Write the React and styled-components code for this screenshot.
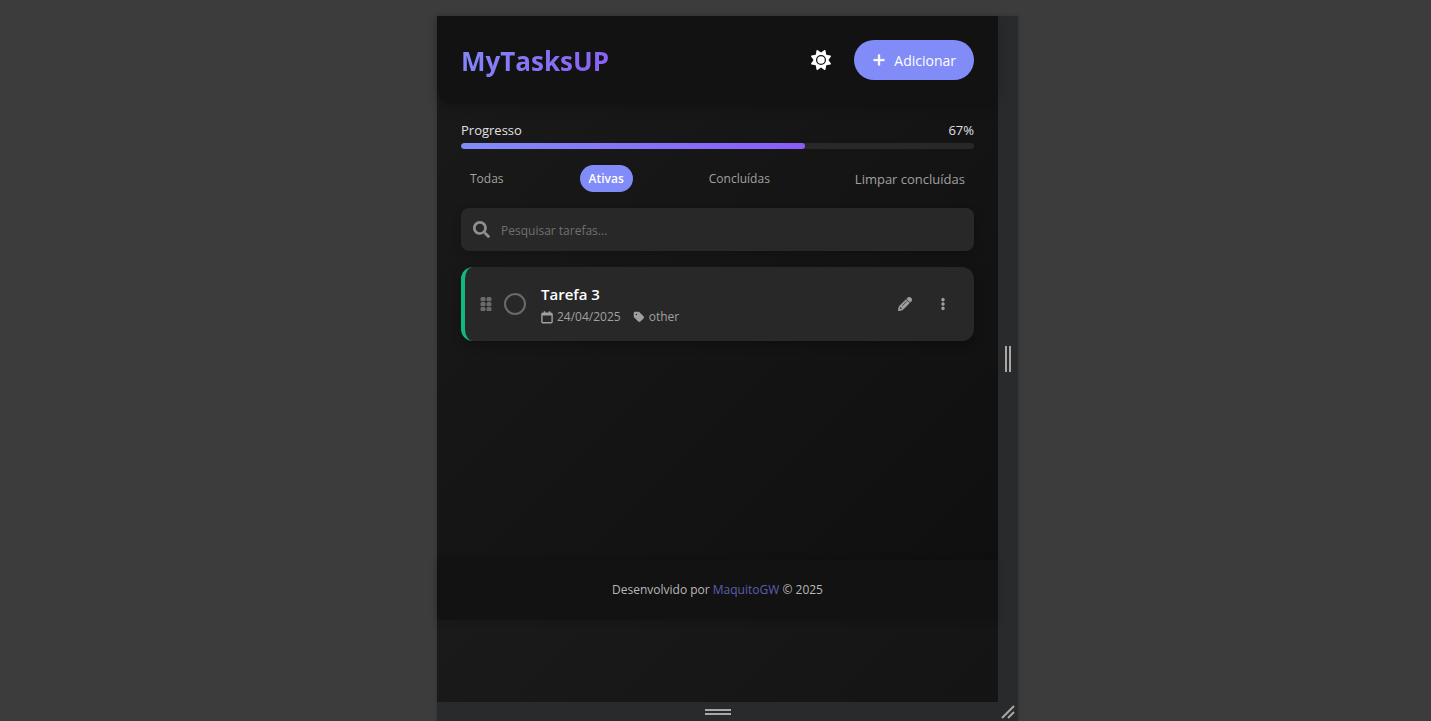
import styled, { createGlobalStyle } from "styled-components";
import React, { useState } from "react";
import { FaSearch } from "react-icons/fa";
import { FaSun, FaPlus, FaTag, FaPencil, FaEllipsisVertical } from "react-icons/fa6";

const GlobalStyle = createGlobalStyle`
    * {
        box-sizing: border-box;
    }

    body {
        margin: 0;
        background: #3c3c3c;
        font-family: "Segoe UI", "Open Sans", "Noto Sans", sans-serif;
        color: #e0e0e0;
    }

    button,
    input {
        font-family: inherit;
    }
`;

const Stage = styled.div`
    display: flex;
    justify-content: center;
    height: 100vh;
    padding: 16px 0 0 24px;
    overflow: hidden;
`;

const Device = styled.div`
    display: grid;
    grid-template-columns: minmax(0, 1fr) 20px;
    grid-template-rows: minmax(0, 1fr) 19px;
    width: 100%;
    max-width: 581px;
    background: #292a2c;
    box-shadow: 0 0 4px rgba(0, 0, 0, 0.2);
`;

const Screen = styled.div`
    background: #121212 linear-gradient(135deg, #1a1a1a 0%, #0f0f0f 100%);
    background-size: 100% 604px;
    padding-bottom: 82px;
`;

const Page = styled.div`
    display: flex;
    flex-direction: column;
    height: 100%;
`;

const Header = styled.header`
    display: flex;
    justify-content: space-between;
    align-items: center;
    padding: 24px;
    background: #121212;
    border-radius: 0 0 16px 16px;
    box-shadow: 0 4px 12px rgba(0, 0, 0, 0.2);
`;

const Title = styled.h1`
    margin: 0;
    height: 40px;
    font-size: 26px;
    line-height: 42px;
    font-weight: 700;
    background: linear-gradient(135deg, #818cf8, #8b5cf6);
    background-clip: text;
    color: transparent;
`;

const HeaderActions = styled.div`
    display: flex;
    align-items: center;
    gap: 13px;
`;

const ThemeButton = styled.button`
    display: flex;
    align-items: center;
    justify-content: center;
    width: 40px;
    height: 40px;
    padding: 0;
    border: none;
    background: none;
    color: #ffffff;
    font-size: 20px;
    cursor: pointer;
`;

const AddButton = styled.button`
    display: flex;
    align-items: center;
    gap: 8px;
    height: 40px;
    padding: 0 18px;
    border: none;
    border-radius: 20px;
    background: #818cf8;
    color: #ffffff;
    font-size: 14px;
    font-weight: 500;
    cursor: pointer;

    svg {
        stroke: currentColor;
        stroke-width: 16px;
    }
`;

const Main = styled.main`
    display: flex;
    flex: 1;
    flex-direction: column;
    gap: 16px;
    padding: 16px 24px;
`;

const ProgressLabels = styled.div`
    display: flex;
    justify-content: space-between;
    font-size: 13px;
    line-height: 20px;
    padding-bottom: 3px;
`;

const ProgressTrack = styled.div`
    height: 6px;
    border-radius: 3px;
    background: #282828;
    overflow: hidden;
`;

const ProgressFill = styled.div`
    height: 100%;
    border-radius: 3px;
    background: linear-gradient(90deg, #818cf8, #8b5cf6);
`;

const Filters = styled.div`
    display: flex;
    justify-content: space-between;
    align-items: center;
`;

const FilterButton = styled.button`
    padding: 1px 9px 0;
    border: none;
    border-radius: 14px;
    background: ${props => (props.$active ? "#818cf8" : "none")};
    color: ${props => (props.$active ? "#ffffff" : "#a0a0a0")};
    font-size: 12px;
    font-weight: ${props => (props.$active ? 600 : 400)};
    line-height: 26px;
    cursor: pointer;
`;

const ClearButton = styled(FilterButton)`
    font-size: 13px;
`;

const SearchBox = styled.label`
    display: flex;
    align-items: center;
    gap: 11px;
    height: 43px;
    padding: 0 12px;
    border-radius: 8px;
    background: #282828;
    color: #8f8f8f;
    box-shadow: 0 2px 8px rgba(0, 0, 0, 0.2);

    svg {
        flex: none;
        font-size: 17px;
    }
`;

const SearchInput = styled.input`
    flex: 1;
    min-width: 0;
    padding: 2px 0 0;
    border: none;
    outline: none;
    background: none;
    color: #ffffff;
    font-size: 12px;

    &::placeholder {
        color: #707070;
    }
`;

const TaskList = styled.ul`
    margin: 0;
    padding: 0;
    list-style: none;
`;

const TaskCard = styled.li`
    display: flex;
    align-items: center;
    height: 74px;
    padding: 0 12px 0 15px;
    border-left: 4px solid #10b981;
    border-radius: 12px;
    background: #282828;
    box-shadow: 0 4px 10px rgba(0, 0, 0, 0.25);
`;

const DragHandle = styled.span`
    display: flex;
    color: #6a6a6a;
    cursor: grab;
`;

const TaskCheck = styled.input`
    appearance: none;
    flex: none;
    width: 22px;
    height: 22px;
    margin: 0 15px 0 12px;
    border: 2px solid #6a6a6a;
    border-radius: 50%;
    cursor: pointer;

    &:checked {
        background: #10b981;
        border-color: #10b981;
    }
`;

const TaskBody = styled.div`
    flex: 1;
    min-width: 0;
    padding-top: 2px;
`;

const TaskName = styled.h3`
    margin: 0;
    color: #ffffff;
    font-size: 15px;
    font-weight: 600;
    line-height: 24px;
`;

const TaskMeta = styled.div`
    display: flex;
    gap: 12px;
    color: #a0a0a0;
    font-size: 12px;
    line-height: 22px;
`;

const MetaItem = styled.span`
    display: flex;
    align-items: center;
    gap: 4px;
`;

const IconButton = styled.button`
    display: flex;
    align-items: center;
    justify-content: center;
    width: 38px;
    height: 38px;
    padding: 0;
    border: none;
    background: none;
    color: #a0a0a0;
    font-size: 14px;
    cursor: pointer;

    svg {
        stroke: currentColor;
        stroke-width: 14px;
    }
`;

const Footer = styled.footer`
    padding: 20px 24px;
    background: #121212;
    box-shadow: 0 0 8px rgba(0, 0, 0, 0.2);
    color: #b8b8b8;
    font-size: 12px;
    line-height: 20px;
    text-align: center;

    a {
        color: #5b5fb0;
        text-decoration: none;
    }
`;

const ResizeBar = styled.div`
    display: flex;
    flex-direction: ${props => (props.$vertical ? "row" : "column")};
    align-items: center;
    justify-content: center;
    gap: 2px;

    &::before,
    &::after {
        content: "";
        width: ${props => (props.$vertical ? "2px" : "26px")};
        height: ${props => (props.$vertical ? "26px" : "2px")};
        background: #a8a8a8;
    }
`;

const ResizeCorner = styled.div`
    display: flex;
    align-items: center;
    justify-content: center;
`;

const tasks = [{ id: 3, name: "Tarefa 3", date: "24/04/2025", category: "other" }];

const filters = ["Todas", "Ativas", "Concluídas"];

function GripIcon() {
    return (
        <svg width="12" height="14" viewBox="0 0 12 14" fill="currentColor">
            {[0, 5, 10].map(y => (
                <React.Fragment key={y}>
                    <rect x="0.5" y={y} width="5" height="4.2" rx="1.5" />
                    <rect x="6.5" y={y} width="5" height="4.2" rx="1.5" />
                </React.Fragment>
            ))}
        </svg>
    );
}

function CalendarIcon() {
    return (
        <svg width="12" height="13" viewBox="0 0 12 13" fill="none" stroke="currentColor">
            <rect x="0.9" y="2.2" width="10.2" height="9.6" rx="1" strokeWidth="1.4" />
            <path d="M1 3.4h10" strokeWidth="2.2" />
            <path d="M3.5 0.3v2.5M8.5 0.3v2.5" strokeWidth="1.5" />
        </svg>
    );
}

function Task({ task }) {
    const [done, setDone] = useState(false);

    return (
        <TaskCard>
            <DragHandle>
                <GripIcon />
            </DragHandle>
            <TaskCheck
                type="checkbox"
                aria-label={task.name}
                checked={done}
                onChange={() => setDone(!done)}
            />
            <TaskBody>
                <TaskName>{task.name}</TaskName>
                <TaskMeta>
                    <MetaItem><CalendarIcon />{task.date}</MetaItem>
                    <MetaItem><FaTag />{task.category}</MetaItem>
                </TaskMeta>
            </TaskBody>
            <IconButton aria-label="Editar"><FaPencil /></IconButton>
            <IconButton aria-label="Mais opções"><FaEllipsisVertical /></IconButton>
        </TaskCard>
    );
}

function App() {
    const [filter, setFilter] = useState("Ativas");
    const [search, setSearch] = useState("");
    const progress = 67;

    const visible = tasks.filter(task =>
        filter !== "Concluídas" && task.name.toLowerCase().includes(search.toLowerCase())
    );

    return (
        <Stage>
            <GlobalStyle />
            <Device>
                <Screen>
                    <Page>
                        <Header>
                            <Title>MyTasksUP</Title>
                            <HeaderActions>
                                <ThemeButton aria-label="Alternar tema"><FaSun /></ThemeButton>
                                <AddButton><FaPlus />Adicionar</AddButton>
                            </HeaderActions>
                        </Header>
                        <Main>
                            <div>
                                <ProgressLabels>
                                    <span>Progresso</span>
                                    <span>{progress}%</span>
                                </ProgressLabels>
                                <ProgressTrack>
                                    <ProgressFill style={{ width: `${progress}%` }} />
                                </ProgressTrack>
                            </div>
                            <Filters>
                                {filters.map(name => (
                                    <FilterButton
                                        key={name}
                                        $active={name === filter}
                                        onClick={() => setFilter(name)}
                                    >
                                        {name}
                                    </FilterButton>
                                ))}
                                <ClearButton>Limpar concluídas</ClearButton>
                            </Filters>
                            <SearchBox>
                                <FaSearch />
                                <SearchInput
                                    type="text"
                                    aria-label="Pesquisar tarefas"
                                    placeholder="Pesquisar tarefas..."
                                    value={search}
                                    onChange={e => setSearch(e.target.value)}
                                />
                            </SearchBox>
                            <TaskList>
                                {visible.map(task => <Task key={task.id} task={task} />)}
                            </TaskList>
                        </Main>
                        <Footer>
                            Desenvolvido por <a href="#maquitogw">MaquitoGW</a> © 2025
                        </Footer>
                    </Page>
                </Screen>
                <ResizeBar $vertical />
                <ResizeBar />
                <ResizeCorner>
                    <svg width="14" height="14" viewBox="0 0 14 14" stroke="#a8a8a8" strokeWidth="2">
                        <path d="M1 13L13 1M7 13L13 7" />
                    </svg>
                </ResizeCorner>
            </Device>
        </Stage>
    );
}

export default App;
